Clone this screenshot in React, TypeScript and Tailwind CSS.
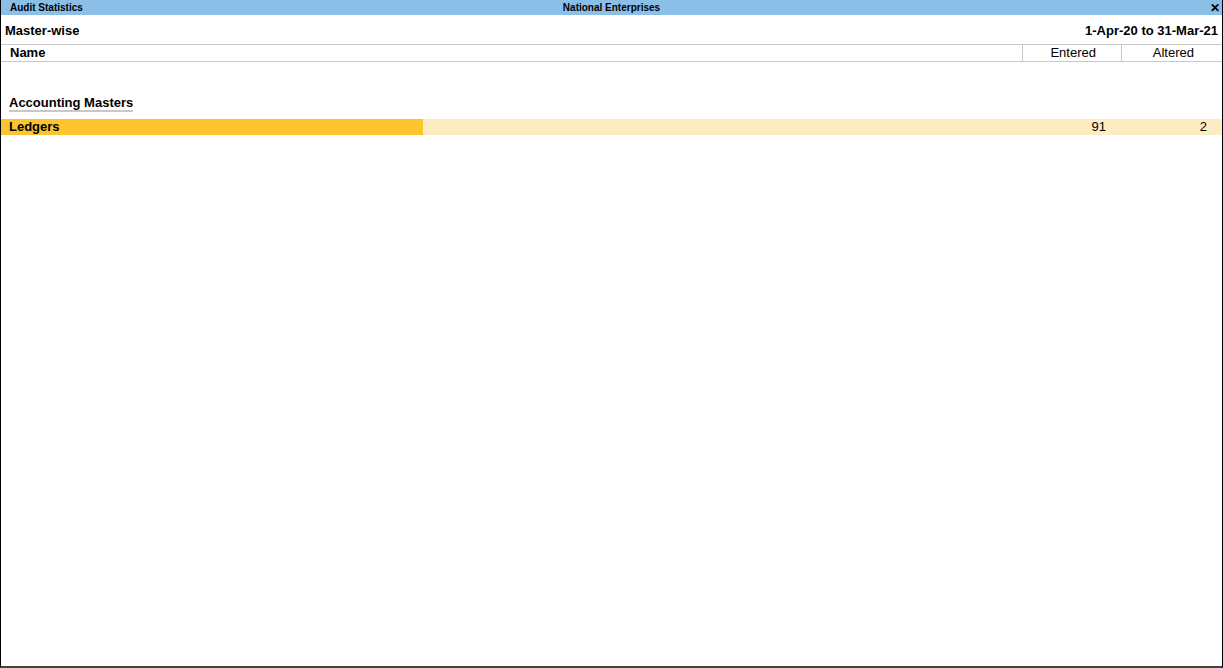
export default function App() {
  return (
    <div
      className="flex h-[668px] w-[1223px] flex-col border-x border-b-2 border-l-black border-r-black border-b-[#444] bg-white text-black"
      style={{ fontFamily: '"Liberation Sans", Arial, sans-serif' }}
    >
      {/* title bar */}
      <div className="relative flex h-[15px] shrink-0 items-center bg-[#8cbfe8] pl-[9px] pr-[2px] text-[10px] font-bold leading-none">
        <span>Audit Statistics</span>
        <span className="absolute left-1/2 -translate-x-1/2">National Enterprises</span>
        <span className="ml-auto text-[12px]">✕</span>
      </div>

      {/* report heading */}
      <div className="flex h-[29px] shrink-0 items-center justify-between pl-[4px] pr-[4px] pt-[3px] text-[13px] font-bold">
        <span>Master-wise</span>
        <span>1-Apr-20 to 31-Mar-21</span>
      </div>

      {/* column header */}
      <div className="flex h-[18px] shrink-0 border-y border-[#c8c8c8] text-[13px]">
        <div className="flex flex-1 items-center pl-[9px] font-bold">Name</div>
        <div className="flex w-[99px] items-center justify-end border-l border-[#c8c8c8] pr-[25px]">Entered</div>
        <div className="flex w-[101px] items-center justify-end border-l border-[#c8c8c8] pr-[28px]">Altered</div>
      </div>

      {/* body */}
      <div className="flex flex-1 flex-col pt-[28px]">
        <div className="pl-[8px]">
          <span className="inline-block border-b-2 border-[#c8c8c8] text-[13px] font-bold leading-[15px]">
            Accounting Masters
          </span>
        </div>
        <div className="mt-[5px] flex h-[16px] bg-[#fdebc1] text-[13px]">
          <div className="flex w-[422px] items-center bg-[#fec42f] pl-[8px] font-bold">Ledgers</div>
          <div className="flex-1" />
          <div className="flex w-[120px] items-center justify-end pr-[16px]">91</div>
          <div className="flex w-[100px] items-center justify-end pr-[15px]">2</div>
        </div>
      </div>
    </div>
  )
}
